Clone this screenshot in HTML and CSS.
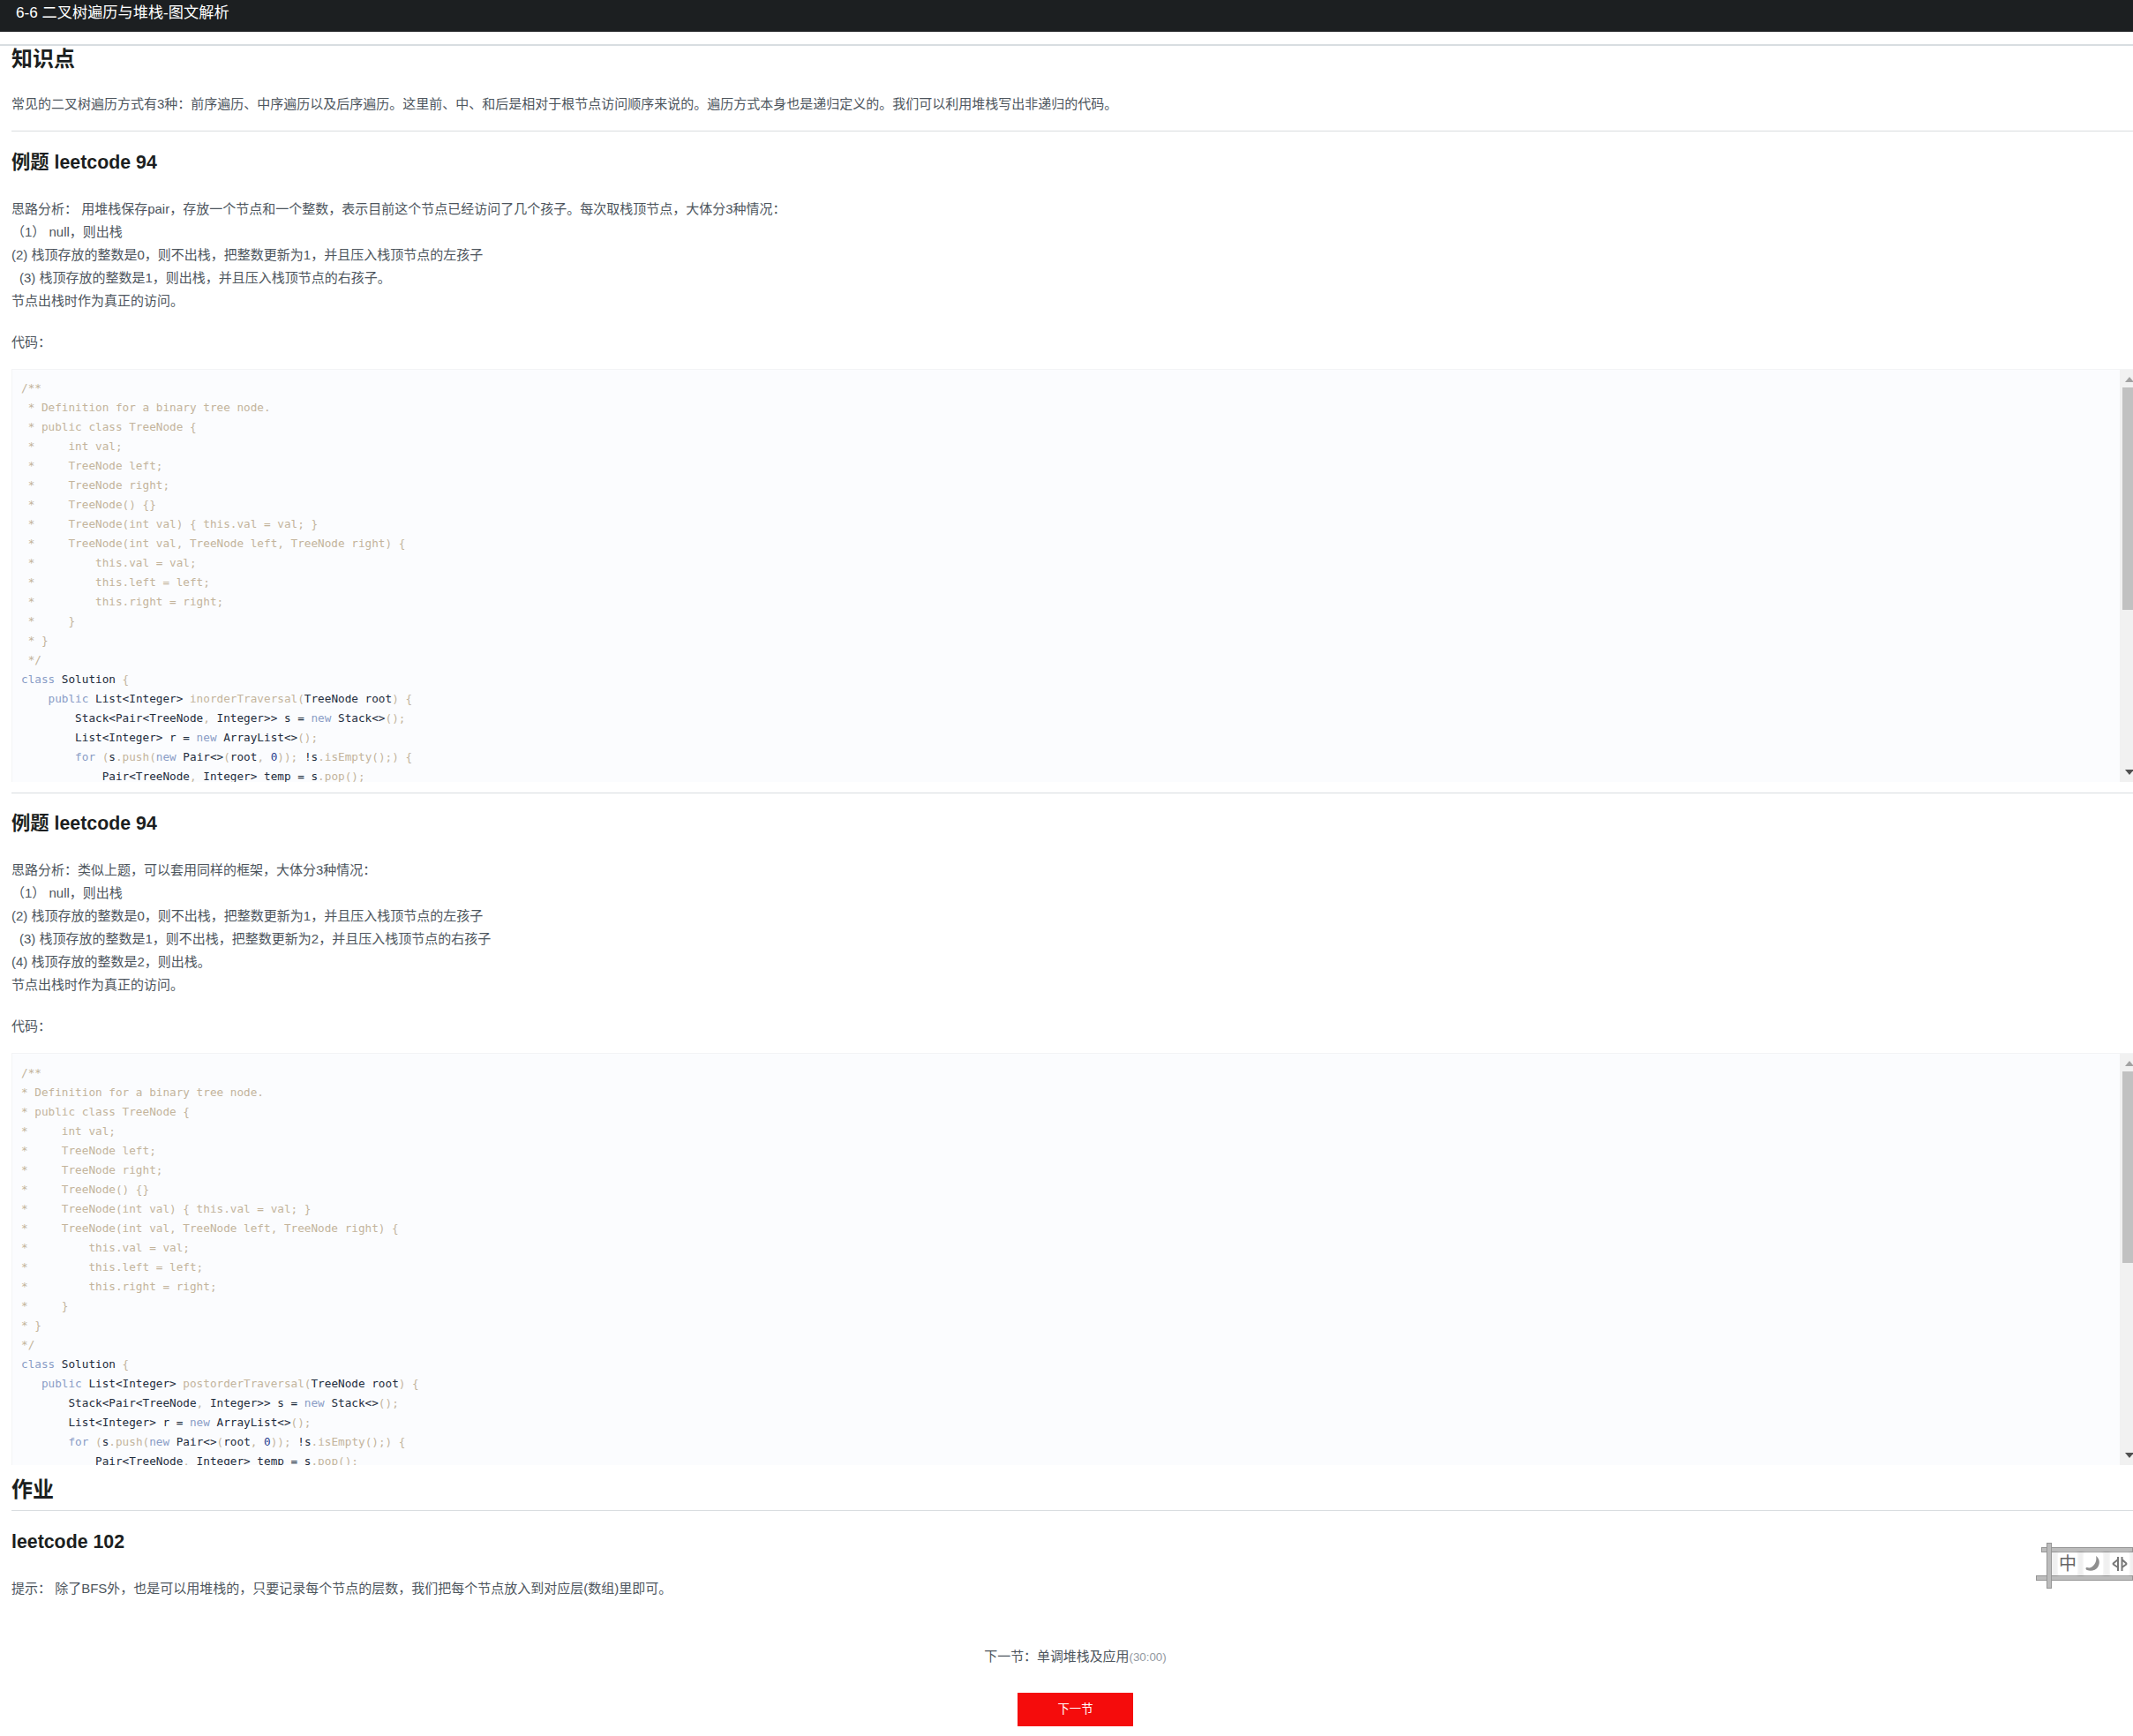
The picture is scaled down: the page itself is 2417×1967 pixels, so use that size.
FILE: index.html
```html
<!DOCTYPE html>
<html lang="zh">
<head>
<meta charset="utf-8">
<title>6-6 二叉树遍历与堆栈-图文解析</title>
<link rel="stylesheet" href="styles.css">
</head>
<body>
<header class="topbar"><span class="topbar-title">6-6 二叉树遍历与堆栈-图文解析</span></header>
<div class="rule-top"></div>
<main class="content">
  <h2 class="h-big">知识点</h2>
  <p class="para first">常见的二叉树遍历方式有3种：前序遍历、中序遍历以及后序遍历。这里前、中、和后是相对于根节点访问顺序来说的。遍历方式本身也是递归定义的。我们可以利用堆栈写出非递归的代码。</p>
  <hr class="rule rule-a">
  <h3 class="h-mid">例题 leetcode 94</h3>
  <div class="para notes">
    <div>思路分析： 用堆栈保存pair，存放一个节点和一个整数，表示目前这个节点已经访问了几个孩子。每次取栈顶节点，大体分3种情况：</div>
    <div class="paren">（1） null，则出栈</div>
    <div>(2) 栈顶存放的整数是0，则不出栈，把整数更新为1，并且压入栈顶节点的左孩子</div>
    <div class="ind">(3) 栈顶存放的整数是1，则出栈，并且压入栈顶节点的右孩子。</div>
    <div>节点出栈时作为真正的访问。</div>
  </div>
  <p class="para code-label">代码：</p>
  <div class="codebox box-one">
<pre class="code"><span class="c">/**
 * Definition for a binary tree node.
 * public class TreeNode {
 *     int val;
 *     TreeNode left;
 *     TreeNode right;
 *     TreeNode() {}
 *     TreeNode(int val) { this.val = val; }
 *     TreeNode(int val, TreeNode left, TreeNode right) {
 *         this.val = val;
 *         this.left = left;
 *         this.right = right;
 *     }
 * }
 */</span>
<span class="k">class</span> Solution <span class="c">{</span>
    <span class="k">public</span> List&lt;Integer&gt; <span class="c">inorderTraversal(</span>TreeNode root<span class="c">) {</span>
        Stack&lt;Pair&lt;TreeNode<span class="c">,</span> Integer&gt;&gt; s = <span class="k">new</span> Stack&lt;&gt;<span class="c">();</span>
        List&lt;Integer&gt; r = <span class="k">new</span> ArrayList&lt;&gt;<span class="c">();</span>
        <span class="k">for</span> <span class="c">(</span>s<span class="c">.push(</span><span class="k">new</span> Pair&lt;&gt;<span class="c">(</span>root<span class="c">,</span> <span class="n">0</span><span class="c">));</span> !s<span class="c">.isEmpty();) {</span>
            Pair&lt;TreeNode<span class="c">,</span> Integer&gt; temp = s<span class="c">.pop();</span>
</pre>
    <div class="scrollbar">
      <span class="arrow arrow-up"></span>
      <span class="thumb thumb-one"></span>
      <span class="arrow arrow-down"></span>
    </div>
  </div>
  <hr class="rule rule-b">
  <h3 class="h-mid">例题 leetcode 94</h3>
  <div class="para notes">
    <div>思路分析：类似上题，可以套用同样的框架，大体分3种情况：</div>
    <div class="paren">（1） null，则出栈</div>
    <div>(2) 栈顶存放的整数是0，则不出栈，把整数更新为1，并且压入栈顶节点的左孩子</div>
    <div class="ind">(3) 栈顶存放的整数是1，则不出栈，把整数更新为2，并且压入栈顶节点的右孩子</div>
    <div>(4) 栈顶存放的整数是2，则出栈。</div>
    <div>节点出栈时作为真正的访问。</div>
  </div>
  <p class="para code-label">代码：</p>
  <div class="codebox box-two">
<pre class="code"><span class="c">/**
* Definition for a binary tree node.
* public class TreeNode {
*     int val;
*     TreeNode left;
*     TreeNode right;
*     TreeNode() {}
*     TreeNode(int val) { this.val = val; }
*     TreeNode(int val, TreeNode left, TreeNode right) {
*         this.val = val;
*         this.left = left;
*         this.right = right;
*     }
* }
*/</span>
<span class="k">class</span> Solution <span class="c">{</span>
   <span class="k">public</span> List&lt;Integer&gt; <span class="c">postorderTraversal(</span>TreeNode root<span class="c">) {</span>
       Stack&lt;Pair&lt;TreeNode<span class="c">,</span> Integer&gt;&gt; s = <span class="k">new</span> Stack&lt;&gt;<span class="c">();</span>
       List&lt;Integer&gt; r = <span class="k">new</span> ArrayList&lt;&gt;<span class="c">();</span>
       <span class="k">for</span> <span class="c">(</span>s<span class="c">.push(</span><span class="k">new</span> Pair&lt;&gt;<span class="c">(</span>root<span class="c">,</span> <span class="n">0</span><span class="c">));</span> !s<span class="c">.isEmpty();) {</span>
           Pair&lt;TreeNode<span class="c">,</span> Integer&gt; temp = s<span class="c">.pop();</span>
</pre>
    <div class="scrollbar">
      <span class="arrow arrow-up"></span>
      <span class="thumb thumb-two"></span>
      <span class="arrow arrow-down"></span>
    </div>
  </div>
  <h2 class="h-big homework">作业</h2>
  <hr class="rule rule-c">
  <h3 class="h-mid">leetcode 102</h3>
  <p class="para hint">提示： 除了BFS外，也是可以用堆栈的，只要记录每个节点的层数，我们把每个节点放入到对应层(数组)里即可。</p>
  <div class="next">
    <p class="next-text">下一节：单调堆栈及应用<span class="next-time">(30:00)</span></p>
    <a class="next-btn">下一节</a>
  </div>
</main>
<div class="ime">
  <span class="ime-fill"></span>
  <span class="ime-bar ime-top"></span>
  <span class="ime-bar ime-bottom"></span>
  <span class="ime-bar ime-side"></span>
  <span class="ime-tile ime-zh">中</span>
  <span class="ime-tile ime-moon"><svg class="ime-icon" viewBox="0 0 18 18" width="18" height="18"><path d="M12 0c3 2 5 6 3 11-2 5-8 7-13 5-2-1-2-3 0-3 3 1 5 0 7-2 3-3 4-7 3-11z" fill="#8f8f8f"/></svg></span>
  <span class="ime-tile ime-set"><svg class="ime-icon" viewBox="0 0 18 18" width="18" height="18"><path d="M7 1v16M11.500 1v16M1 9l6-5M1 9l6 4M17 9l-5.500-5M17 9l-5.500 4" stroke="#777" stroke-width="2" fill="none"/></svg></span>
</div>
</body>
</html>
```

FILE: styles.css
```css
html, body {
  margin: 0;
  padding: 0;
  overflow: hidden;
  background: #fff;
}
body {
  position: relative;
  height: 1967px;
  font-family: "Liberation Sans", "Noto Sans CJK SC", sans-serif;
  color: #4d555d;
}
.topbar {
  height: 36px;
  background: #1c1f21;
  padding-left: 18px;
}
.topbar-title {
  display: block;
  font-size: 17.2px;
  line-height: 28px;
  color: #fff;
}
.rule-top {
  height: 2px;
  margin-top: 14px;
  background: #d8dde1;
}
.content {
  width: 2411px;
  padding-left: 13px;
}
.h-big {
  margin: 0;
  font-size: 24px;
  line-height: 30px;
  font-weight: 700;
  color: #1c1f21;
}
.h-mid {
  margin: 0;
  font-size: 21.33px;
  line-height: 30px;
  font-weight: 700;
  color: #1c1f21;
}
.para {
  margin: 0;
  font-size: 15px;
  line-height: 26px;
  color: #4d555d;
}
.first { margin-top: 23px; }
.notes { margin-top: 25px; }
.hint { margin-top: 25px; }
.ind { padding-left: 9px; }
.paren { padding-left: 0; }
.code-label { margin-top: 21px; }
.rule {
  border: 0;
  height: 1px;
  margin: 0;
  background: #d9dde0;
}
.rule-a { margin-top: 17px; margin-bottom: 20px; }
.rule-b { margin-top: 12px; margin-bottom: 19px; }
.rule-c { margin-top: 8px; margin-bottom: 20px; }
.homework { margin-top: 13px; }
.codebox {
  position: relative;
  box-sizing: border-box;
  margin-top: 17px;
  overflow: hidden;
  background: #fbfcfe;
  border-top: 1px solid #f3f4f5;
  border-left: 1px solid #f3f4f5;
}
.box-one { height: 468px; }
.box-two { height: 467px; }
.code {
  margin: 0;
  padding: 10px 0 0 10px;
  font-family: "DejaVu Sans Mono", monospace;
  font-size: 12.69px;
  line-height: 22px;
  color: #1f2d3d;
}
.box-two .code { padding-top: 11px; }
.c { color: #c3b49c; }
.k { color: #8a9cc6; }
.n { color: #2a3f8f; }
.scrollbar {
  position: absolute;
  top: 0;
  right: 0;
  bottom: 0;
  width: 22px;
  background: #f1f1f1;
}
.thumb {
  position: absolute;
  left: 3px;
  right: 3px;
  background: #c1c1c1;
}
.thumb-one { top: 20px; height: 252px; }
.thumb-two { top: 20px; height: 217px; }
.arrow {
  position: absolute;
  left: 6px;
  width: 0;
  height: 0;
  border-left: 5px solid transparent;
  border-right: 5px solid transparent;
}
.arrow-up { top: 8px; border-bottom: 6px solid #a3a3a3; }
.arrow-down { bottom: 8px; border-top: 6px solid #505050; }
.next {
  display: flex;
  flex-direction: column;
  align-items: center;
  margin-top: 51px;
}
.next-text {
  margin: 0;
  font-size: 14.93px;
  line-height: 26px;
  color: #4d555d;
}
.next-time {
  font-size: 13.33px;
  color: #93999f;
}
.next-btn {
  display: block;
  width: 131px;
  height: 38px;
  margin-top: 27px;
  background: #f50c0c;
  color: #fff;
  font-size: 13.33px;
  line-height: 38px;
  text-align: center;
}
.ime {
  position: absolute;
  left: 2307px;
  top: 1748px;
  width: 110px;
  height: 52px;
}
.ime-fill {
  position: absolute;
  left: 16px;
  right: 0;
  top: 10px;
  height: 28px;
  background: #f0f0f0;
}
.ime-bar {
  position: absolute;
  background: #bcbcbc;
  border: 1px solid #969696;
  box-sizing: border-box;
  filter: blur(0.6px);
}
.ime-top { left: 6px; right: 0; top: 5px; height: 6px; }
.ime-bottom { left: 0; right: 0; top: 37px; height: 6px; }
.ime-side { left: 12px; top: 0; width: 6px; height: 52px; }
.ime-tile {
  position: absolute;
  top: 12px;
  width: 22px;
  height: 24px;
  background: #fff;
  box-shadow: 0 0 3px #fff;
  display: flex;
  align-items: center;
  justify-content: center;
}
.ime-icon { filter: blur(0.4px); }
.ime-zh {
  left: 25px;
  font-size: 20px;
  line-height: 24px;
  color: #666;
}
.ime-moon { left: 54px; }
.ime-set { left: 84px; }
```
